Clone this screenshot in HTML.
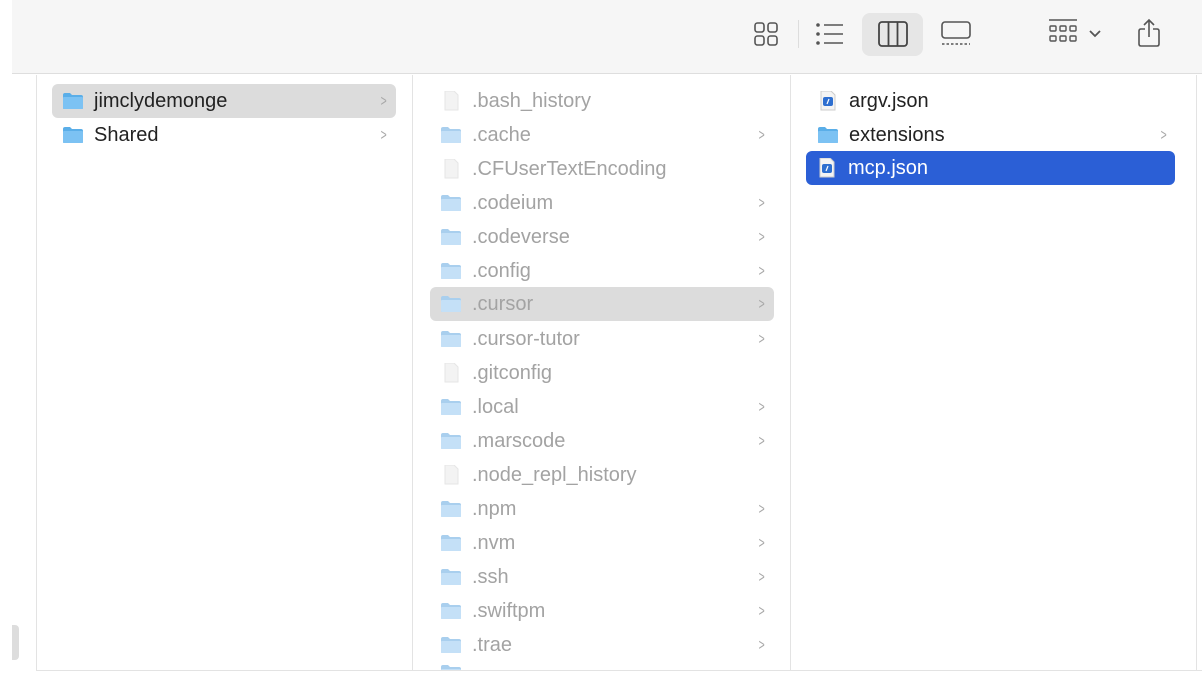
<!DOCTYPE html>
<html><head><meta charset="utf-8"><style>
*{margin:0;padding:0;box-sizing:border-box}
body{width:1202px;height:678px;overflow:hidden;background:#fff;font-family:"Liberation Sans",sans-serif;position:relative}
.tb{position:absolute;left:12px;top:0;width:1190px;height:74px;background:#f6f6f6;border-bottom:1px solid #dedede}
.vl{position:absolute;top:75px;width:1px;height:595px;background:#e3e3e3}
.r{position:absolute;height:34px;font-size:20px;line-height:35px;color:#222;white-space:nowrap}
.r .ic{position:absolute;left:10px;top:8px}
.r .t{position:absolute;left:42px;top:0}
.r .c{position:absolute;top:0;font-size:16px;color:#a8a8a8;transform:scaleX(.65)}
.g{color:#a3a3a3}
.sel{background:#dcdcdc;border-radius:6px}
.blue{background:#2b5fd6;border-radius:6px;color:#fff}
</style></head><body>
<div class="tb">
<svg style="position:absolute;left:741px;top:21px" width="26" height="26" viewBox="0 0 26 26" fill="none" stroke="#555" stroke-width="1.6"><rect x="2" y="2" width="9" height="9" rx="2.5"/><rect x="15" y="2" width="9" height="9" rx="2.5"/><rect x="2" y="15" width="9" height="9" rx="2.5"/><rect x="15" y="15" width="9" height="9" rx="2.5"/></svg>
<div style="position:absolute;left:786px;top:20px;width:1px;height:28px;background:#ddd"></div>
<svg style="position:absolute;left:803px;top:22px" width="30" height="24" viewBox="0 0 30 24" fill="none" stroke="#555" stroke-width="1.6"><circle cx="3" cy="3" r="1" fill="#555"/><circle cx="3" cy="12" r="1" fill="#555"/><circle cx="3" cy="21" r="1" fill="#555"/><path d="M9 3H28M9 12H28M9 21H28"/></svg>
<div style="position:absolute;left:850px;top:13px;width:61px;height:43px;background:#e6e6e6;border-radius:8px"></div>
<svg style="position:absolute;left:866px;top:21px" width="30" height="26" viewBox="0 0 30 26" fill="none" stroke="#444" stroke-width="1.8"><rect x="1" y="1" width="28" height="24" rx="3"/><path d="M10.5 1V25M19.5 1V25"/></svg>
<svg style="position:absolute;left:928px;top:21px" width="32" height="26" viewBox="0 0 32 26" fill="none" stroke="#555" stroke-width="1.6"><rect x="2" y="1" width="28" height="16" rx="3"/><path d="M2 23H30" stroke-dasharray="2.5 2"/></svg>
<svg style="position:absolute;left:1036px;top:19px" width="30" height="28" viewBox="0 0 30 28" fill="none" stroke="#555" stroke-width="1.4"><path d="M1 1H29"/><rect x="2" y="7" width="6" height="5" rx="1"/><rect x="12" y="7" width="6" height="5" rx="1"/><rect x="22" y="7" width="6" height="5" rx="1"/><rect x="2" y="17" width="6" height="5" rx="1"/><rect x="12" y="17" width="6" height="5" rx="1"/><rect x="22" y="17" width="6" height="5" rx="1"/></svg>
<svg style="position:absolute;left:1076px;top:29px" width="14" height="10" viewBox="0 0 14 10" fill="none" stroke="#555" stroke-width="1.8"><path d="M2 2L7 7L12 2"/></svg>
<svg style="position:absolute;left:1125px;top:18px" width="24" height="30" viewBox="0 0 24 30" fill="none" stroke="#555" stroke-width="1.6"><path d="M12 19V2M7 7L12 2L17 7"/><path d="M8 11H4Q2 11 2 13V26Q2 28 4 28H20Q22 28 22 26V13Q22 11 20 11H16"/></svg>
</div>
<div style="position:absolute;left:12px;top:625px;width:7px;height:35px;background:#ddd;border-radius:0 4px 4px 0"></div>
<div class="vl" style="left:36px"></div>
<div class="vl" style="left:412px"></div>
<div class="vl" style="left:790px"></div>
<div class="vl" style="left:1196px"></div>
<div style="position:absolute;left:36px;top:670px;width:1166px;height:1px;background:#e3e3e3"></div>

<svg width="0" height="0" style="position:absolute"><defs>
<symbol id="f" viewBox="0 0 22 18"><path d="M1 3Q1 1 3 1H8L10 3H19Q21 3 21 5V16Q21 17 20 17H2Q1 17 1 16Z" fill="#5aaee8"/><rect x="1" y="5" width="20" height="12" rx="1" fill="#7cc2f3"/></symbol>
<symbol id="fl" viewBox="0 0 22 18"><path d="M1 3Q1 1 3 1H8L10 3H19Q21 3 21 5V16Q21 17 20 17H2Q1 17 1 16Z" fill="#a9cfee"/><rect x="1" y="5" width="20" height="12" rx="1" fill="#c4e0f7"/></symbol>
<symbol id="d" viewBox="0 0 22 20"><path d="M5 0H14L18 4V19H5Z" fill="#f3f3f3" stroke="#e6e6e6"/></symbol>
<symbol id="j" viewBox="0 0 22 20"><path d="M4 0H14L18 4V19H4Z" fill="#f4f4f4" stroke="#ccc"/><rect x="6" y="6" width="10" height="9" rx="2" fill="#2e6fd0"/><path d="M10 13L12 8" stroke="#fff" stroke-width="1.2"/></symbol>
</defs></svg>

<!-- column 1 -->
<div class="r sel" style="left:52px;top:84px;width:344px"><svg class="ic" width="22" height="18"><use href="#f"/></svg><span class="t">jimclydemonge</span><span class="c" style="left:327px">&gt;</span></div>
<div class="r" style="left:52px;top:118px;width:344px"><svg class="ic" width="22" height="18"><use href="#f"/></svg><span class="t">Shared</span><span class="c" style="left:327px">&gt;</span></div>

<!-- column 2 -->
<div class="r g" style="left:430px;top:84px;width:344px"><svg class="ic" width="22" height="20" style="top:7px"><use href="#d"/></svg><span class="t">.bash_history</span></div>
<div class="r g" style="left:430px;top:118px;width:344px"><svg class="ic" width="22" height="18"><use href="#fl"/></svg><span class="t">.cache</span><span class="c" style="left:327px">&gt;</span></div>
<div class="r g" style="left:430px;top:152px;width:344px"><svg class="ic" width="22" height="20" style="top:7px"><use href="#d"/></svg><span class="t">.CFUserTextEncoding</span></div>
<div class="r g" style="left:430px;top:186px;width:344px"><svg class="ic" width="22" height="18"><use href="#fl"/></svg><span class="t">.codeium</span><span class="c" style="left:327px">&gt;</span></div>
<div class="r g" style="left:430px;top:220px;width:344px"><svg class="ic" width="22" height="18"><use href="#fl"/></svg><span class="t">.codeverse</span><span class="c" style="left:327px">&gt;</span></div>
<div class="r g" style="left:430px;top:254px;width:344px"><svg class="ic" width="22" height="18"><use href="#fl"/></svg><span class="t">.config</span><span class="c" style="left:327px">&gt;</span></div>
<div class="r g sel" style="left:430px;top:287px;width:344px"><svg class="ic" width="22" height="18"><use href="#fl"/></svg><span class="t">.cursor</span><span class="c" style="left:327px">&gt;</span></div>
<div class="r g" style="left:430px;top:322px;width:344px"><svg class="ic" width="22" height="18"><use href="#fl"/></svg><span class="t">.cursor-tutor</span><span class="c" style="left:327px">&gt;</span></div>
<div class="r g" style="left:430px;top:356px;width:344px"><svg class="ic" width="22" height="20" style="top:7px"><use href="#d"/></svg><span class="t">.gitconfig</span></div>
<div class="r g" style="left:430px;top:390px;width:344px"><svg class="ic" width="22" height="18"><use href="#fl"/></svg><span class="t">.local</span><span class="c" style="left:327px">&gt;</span></div>
<div class="r g" style="left:430px;top:424px;width:344px"><svg class="ic" width="22" height="18"><use href="#fl"/></svg><span class="t">.marscode</span><span class="c" style="left:327px">&gt;</span></div>
<div class="r g" style="left:430px;top:458px;width:344px"><svg class="ic" width="22" height="20" style="top:7px"><use href="#d"/></svg><span class="t">.node_repl_history</span></div>
<div class="r g" style="left:430px;top:492px;width:344px"><svg class="ic" width="22" height="18"><use href="#fl"/></svg><span class="t">.npm</span><span class="c" style="left:327px">&gt;</span></div>
<div class="r g" style="left:430px;top:526px;width:344px"><svg class="ic" width="22" height="18"><use href="#fl"/></svg><span class="t">.nvm</span><span class="c" style="left:327px">&gt;</span></div>
<div class="r g" style="left:430px;top:560px;width:344px"><svg class="ic" width="22" height="18"><use href="#fl"/></svg><span class="t">.ssh</span><span class="c" style="left:327px">&gt;</span></div>
<div class="r g" style="left:430px;top:594px;width:344px"><svg class="ic" width="22" height="18"><use href="#fl"/></svg><span class="t">.swiftpm</span><span class="c" style="left:327px">&gt;</span></div>
<div class="r g" style="left:430px;top:628px;width:344px"><svg class="ic" width="22" height="18"><use href="#fl"/></svg><span class="t">.trae</span><span class="c" style="left:327px">&gt;</span></div>
<div style="position:absolute;left:440px;top:664px;width:22px;height:6px;overflow:hidden"><svg width="22" height="18"><use href="#fl"/></svg></div>

<!-- column 3 -->
<div class="r" style="left:807px;top:84px;width:368px"><svg class="ic" width="22" height="20" style="top:7px"><use href="#j"/></svg><span class="t">argv.json</span></div>
<div class="r" style="left:807px;top:118px;width:368px"><svg class="ic" width="22" height="18"><use href="#f"/></svg><span class="t">extensions</span><span class="c" style="left:352px">&gt;</span></div>
<div class="r blue" style="left:806px;top:151px;width:369px"><svg class="ic" width="22" height="20" style="top:7px"><use href="#j"/></svg><span class="t">mcp.json</span></div>
</body></html>
